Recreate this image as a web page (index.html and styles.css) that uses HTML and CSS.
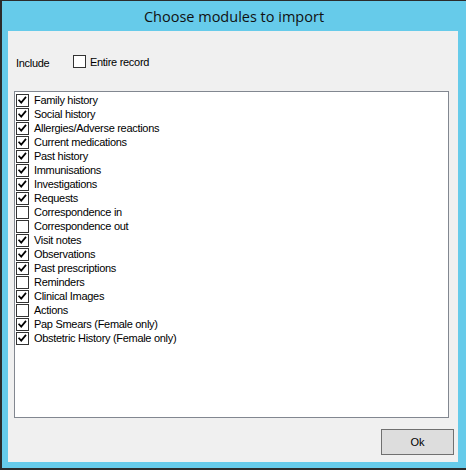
FILE: index.html
```html
<!DOCTYPE html>
<html>
<head>
<meta charset="utf-8">
<link rel="stylesheet" href="styles.css">
</head>
<body>
<div class="window">
  <div class="titlebar">Choose modules to import</div>
  <div class="content">
    <div class="include-row">
      <span class="include-label">Include</span>
      <label class="check-item">
        <span class="box"></span>
        <span class="check-text">Entire record</span>
      </label>
    </div>
    <div class="listbox">
      <div class="row"><span class="box on"><svg viewBox="0 0 13 13"><polyline points="2.5,6.3 5,9 10,3"/></svg></span><span class="check-text">Family history</span></div>
      <div class="row"><span class="box on"><svg viewBox="0 0 13 13"><polyline points="2.5,6.3 5,9 10,3"/></svg></span><span class="check-text">Social history</span></div>
      <div class="row"><span class="box on"><svg viewBox="0 0 13 13"><polyline points="2.5,6.3 5,9 10,3"/></svg></span><span class="check-text">Allergies/Adverse reactions</span></div>
      <div class="row"><span class="box on"><svg viewBox="0 0 13 13"><polyline points="2.5,6.3 5,9 10,3"/></svg></span><span class="check-text">Current medications</span></div>
      <div class="row"><span class="box on"><svg viewBox="0 0 13 13"><polyline points="2.5,6.3 5,9 10,3"/></svg></span><span class="check-text">Past history</span></div>
      <div class="row"><span class="box on"><svg viewBox="0 0 13 13"><polyline points="2.5,6.3 5,9 10,3"/></svg></span><span class="check-text">Immunisations</span></div>
      <div class="row"><span class="box on"><svg viewBox="0 0 13 13"><polyline points="2.5,6.3 5,9 10,3"/></svg></span><span class="check-text">Investigations</span></div>
      <div class="row"><span class="box on"><svg viewBox="0 0 13 13"><polyline points="2.5,6.3 5,9 10,3"/></svg></span><span class="check-text">Requests</span></div>
      <div class="row"><span class="box"></span><span class="check-text">Correspondence in</span></div>
      <div class="row"><span class="box"></span><span class="check-text">Correspondence out</span></div>
      <div class="row"><span class="box on"><svg viewBox="0 0 13 13"><polyline points="2.5,6.3 5,9 10,3"/></svg></span><span class="check-text">Visit notes</span></div>
      <div class="row"><span class="box on"><svg viewBox="0 0 13 13"><polyline points="2.5,6.3 5,9 10,3"/></svg></span><span class="check-text">Observations</span></div>
      <div class="row"><span class="box on"><svg viewBox="0 0 13 13"><polyline points="2.5,6.3 5,9 10,3"/></svg></span><span class="check-text">Past prescriptions</span></div>
      <div class="row"><span class="box"></span><span class="check-text">Reminders</span></div>
      <div class="row"><span class="box on"><svg viewBox="0 0 13 13"><polyline points="2.5,6.3 5,9 10,3"/></svg></span><span class="check-text">Clinical Images</span></div>
      <div class="row"><span class="box"></span><span class="check-text">Actions</span></div>
      <div class="row"><span class="box on"><svg viewBox="0 0 13 13"><polyline points="2.5,6.3 5,9 10,3"/></svg></span><span class="check-text">Pap Smears (Female only)</span></div>
      <div class="row"><span class="box on"><svg viewBox="0 0 13 13"><polyline points="2.5,6.3 5,9 10,3"/></svg></span><span class="check-text">Obstetric History (Female only)</span></div>
    </div>
    <div class="footer">
      <button class="btn">Ok</button>
    </div>
  </div>
</div>
</body>
</html>
```

FILE: styles.css
```css
html, body {
  margin: 0;
  padding: 0;
}
body {
  width: 466px;
  height: 470px;
  overflow: hidden;
  font-family: "Liberation Sans", Arial, sans-serif;
  font-size: 11px;
  color: #000;
}
.window {
  box-sizing: border-box;
  width: 466px;
  height: 470px;
  background: #66cbea;
  border-top: 1px solid #2b2b2b;
  border-left: 2px solid #2b2b2b;
  border-bottom: 2px solid #2b2b2b;
  padding: 0 8px 6px 6px;
  display: flex;
  flex-direction: column;
}
.titlebar {
  height: 30px;
  flex: none;
  display: flex;
  align-items: center;
  justify-content: center;
  font-family: "Open Sans", "Noto Sans", sans-serif;
  font-size: 14.5px;
  color: #111;
  padding-left: 2px;
}
.content {
  flex: 1;
  background: #f0f0f0;
  padding: 0 4px 0 6px;
  display: flex;
  flex-direction: column;
}
.include-row {
  margin-top: 24px;
  height: 13px;
  display: flex;
  align-items: center;
  padding-left: 2px;
}
.include-label {
  width: 57px;
  letter-spacing: -0.3px;
  padding-top: 2px;
}
.check-item {
  display: flex;
  align-items: center;
}
.box {
  box-sizing: border-box;
  width: 13px;
  height: 13px;
  border: 1px solid #333;
  background: #fff;
  flex: none;
  display: block;
}
.box svg {
  display: block;
  width: 11px;
  height: 11px;
  margin: 0;
  overflow: visible;
}
.box svg polyline {
  fill: none;
  stroke: #000;
  stroke-width: 2;
  stroke-linecap: square;
}
.check-text {
  margin-left: 4px;
  letter-spacing: -0.3px;
  white-space: nowrap;
}
.listbox {
  margin-top: 23px;
  margin-right: 5px;
  height: 327px;
  box-sizing: border-box;
  border: 1px solid #828790;
  background: #fff;
  padding: 1px 1px 0 1px;
}
.row {
  height: 14px;
  display: flex;
  align-items: flex-start;
  line-height: 14px;
}
.row .box {
  margin-top: 1px;
}
.row .check-text {
  margin-left: 5px;
}
.footer {
  display: flex;
  justify-content: flex-end;
  margin-top: 11px;
}
.btn {
  width: 73px;
  height: 26px;
  border: 1px solid #707070;
  background: #dddddd;
  font-family: "Liberation Sans", Arial, sans-serif;
  font-size: 11px;
  color: #000;
  padding: 0;
  margin: 0;
}
```
